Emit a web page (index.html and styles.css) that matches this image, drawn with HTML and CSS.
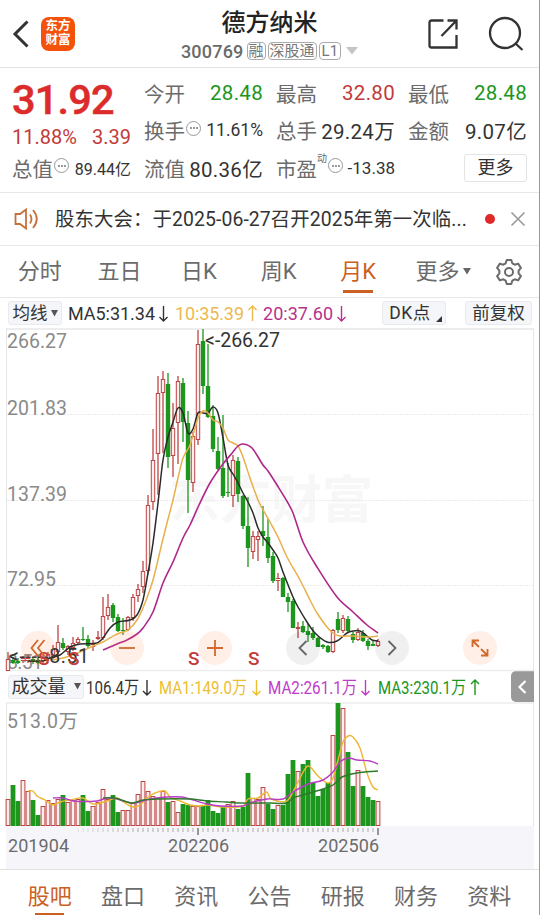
FILE: index.html
```html
<!DOCTYPE html>
<html lang="zh-CN">
<head>
  <meta charset="UTF-8">
  <title>德方纳米 300769</title>
  <link rel="stylesheet" href="styles.css">
</head>
<body>

<header class="header">
  <div class="header-left">
    <svg class="icon-back" width="16" height="28" viewBox="0 0 16 28"><path d="M14.5 1.5L2 14l12.5 12.5"/></svg>
    <div class="logo">东方<br>财富</div>
  </div>
  <div class="header-title">
    <h1>德方纳米</h1>
    <div class="stock-code">
      <span class="code">300769</span>
      <span class="tag">融</span><span class="tag">深股通</span><span class="tag tag-l1">L1</span>
      <svg width="12" height="8" viewBox="0 0 12 8"><path d="M0 0h12L6 7.500z" fill="#c4c4c4"/></svg>
    </div>
  </div>
  <div class="header-right">
    <svg width="30" height="30" viewBox="0 0 30 30"><path d="M15.500 1.500H3.500Q1.500 1.500 1.500 3.500V26.500Q1.500 28.500 3.500 28.500H28.500V16M19.500 1.500h9v9M28.500 1.500L13.500 17"/></svg>
    <svg width="36" height="36" viewBox="0 0 36 36"><circle cx="17" cy="17" r="15"/><path d="M27.500 27.500l7 6.500"/></svg>
  </div>
</header>

<section class="quote">
  <div class="price-col">
    <div class="price">31.92</div>
    <div class="change"><span>11.88%</span><span>3.39</span></div>
    <div class="cell"><span class="label">总值<i class="dots"></i></span><span class="val val-xs">89.44亿</span></div>
  </div>
  <div class="quote-col">
    <div class="cell"><span class="label">今开</span><span class="val green">28.48</span></div>
    <div class="cell"><span class="label">换手<i class="dots"></i></span><span class="val val-s">11.61%</span></div>
    <div class="cell"><span class="label">流值</span><span class="val">80.36亿</span></div>
  </div>
  <div class="quote-col">
    <div class="cell"><span class="label">最高</span><span class="val red">32.80</span></div>
    <div class="cell"><span class="label">总手</span><span class="val">29.24万</span></div>
    <div class="cell"><span class="label">市盈<sup>动</sup><i class="dots"></i></span><span class="val val-pe">-13.38</span></div>
  </div>
  <div class="quote-col">
    <div class="cell"><span class="label">最低</span><span class="val green">28.48</span></div>
    <div class="cell"><span class="label">金额</span><span class="val">9.07亿</span></div>
    <div class="cell cell-end"><button class="btn-more">更多</button></div>
  </div>
</section>

<section class="notice">
  <svg class="icon-speaker" width="27" height="22" viewBox="0 0 27 22"><path d="M1.500 6h4.500L12 1.500v19L6 16H1.500zM16 6.500q3 4.500 0 9M19 2q7.500 9 0 18"/></svg>
  <span class="notice-text">股东大会：于2025-06-27召开2025年第一次临...</span>
  <span class="dot"></span>
  <svg class="icon-close" width="14" height="14" viewBox="0 0 14 14"><path d="M0.500 0.500l13 13M13.500 0.500l-13 13"/></svg>
</section>

<nav class="tabs">
  <span class="tab">分时</span>
  <span class="tab">五日</span>
  <span class="tab">日K</span>
  <span class="tab">周K</span>
  <span class="tab active">月K</span>
  <span class="tab tab-more">更多<svg width="8" height="7" viewBox="0 0 8 7"><path d="M0 0h8L4 6.500z" fill="#666"/></svg></span>
  <svg class="icon-gear" width="28" height="28" viewBox="0 0 28 28"><path d="M11.700 2h4.600l1 3.300 2.400 1.400 3.400-1.100 2.800 4.300-2.300 2.700v2.800l2.300 2.700-2.800 4.300-3.400-1.100-2.400 1.400-1 3.300h-4.600l-1-3.300-2.400-1.400-3.400 1.100-2.800-4.300 2.300-2.700v-2.800L2.100 9.900l2.800-4.300 3.400 1.100 2.400-1.400z"/><circle cx="14" cy="14" r="4"/></svg>
</nav>

<div class="ma-bar">
  <button class="chip chip-ma">均线<svg width="7" height="7" viewBox="0 0 7 7"><path d="M0 0h7L3.500 6.500z" fill="#555"/></svg></button>
  <svg class="readout" width="314" height="30" viewBox="65 0 314 30">
    <text x="68" y="22" textLength="87" fill="#333">MA5:31.34</text>
    <path d="M163.500 8v15m-4-4l4 4 4-4" stroke="#333"/>
    <text x="175" y="22" textLength="69" fill="#ecb94f">10:35.39</text>
    <path d="M252.500 23V8m-4 4l4-4 4 4" stroke="#ecb94f"/>
    <text x="263" y="22" textLength="70" fill="#b8328c">20:37.60</text>
    <path d="M341.500 8v15m-4-4l4 4 4-4" stroke="#b8328c"/>
  </svg>
  <button class="chip chip-dk">DK点<svg width="6" height="6" viewBox="0 0 6 6"><path d="M6 0v6H0z" fill="#333"/></svg></button>
  <button class="chip chip-fq">前复权</button>
</div>

<div class="price-chart">
  <svg id="priceChart" width="539" height="343" viewBox="0 328 539 343"></svg>
  <span class="round b1"><svg width="16" height="18" viewBox="0 0 16 18"><path d="M8 1L1.500 9 8 17M14.500 1L8 9l6.500 8"/></svg></span>
  <span class="round b2"><svg width="18" height="18" viewBox="0 0 18 18"><path d="M1 9h16"/></svg></span>
  <span class="round b3"><svg width="18" height="18" viewBox="0 0 18 18"><path d="M1 9h16M9 1v16"/></svg></span>
  <span class="round gray b4"><svg width="10" height="16" viewBox="0 0 10 16"><path d="M8.500 1L1.500 8l7 7"/></svg></span>
  <span class="round gray b5"><svg width="10" height="16" viewBox="0 0 10 16"><path d="M1.500 1l7 7-7 7"/></svg></span>
  <span class="round b6"><svg width="18" height="18" viewBox="0 0 18 18"><path d="M8 1.500H1.500V8M1.500 1.500L8 8M16.500 10v6.500H10M16.500 16.500L10 10"/></svg></span>
</div>

<div class="vol-bar">
  <button class="chip chip-vol">成交量<svg width="7" height="7" viewBox="0 0 7 7"><path d="M0 0h7L3.500 6.500z" fill="#555"/></svg></button>
  <svg class="readout" width="400" height="31" viewBox="84 0 400 31">
    <text x="86" y="23" textLength="53" lengthAdjust="spacingAndGlyphs" fill="#333">106.4万</text>
    <path d="M147 9v15m-4-4l4 4 4-4" stroke="#333"/>
    <text x="159" y="23" textLength="88" lengthAdjust="spacingAndGlyphs" fill="#ecbe30">MA1:149.0万</text>
    <path d="M256.500 9v15m-4-4l4 4 4-4" stroke="#ecbe30"/>
    <text x="268" y="23" textLength="89" lengthAdjust="spacingAndGlyphs" fill="#c03ccb">MA2:261.1万</text>
    <path d="M365.500 9v15m-4-4l4 4 4-4" stroke="#c03ccb"/>
    <text x="378" y="23" textLength="88" lengthAdjust="spacingAndGlyphs" fill="#1c961c">MA3:230.1万</text>
    <path d="M475 24V9m-4 4l4-4 4 4" stroke="#1c961c"/>
  </svg>
  <span class="collapse"><svg width="9" height="14" viewBox="0 0 9 14"><path d="M7.500 1L1.500 7l6 6"/></svg></span>
</div>

<svg id="volChart" class="vol-chart" width="539" height="167" viewBox="0 702 539 167"></svg>

<nav class="bottom-tabs">
  <span class="btab active">股吧</span>
  <span class="btab">盘口</span>
  <span class="btab">资讯</span>
  <span class="btab">公告</span>
  <span class="btab">研报</span>
  <span class="btab">财务</span>
  <span class="btab">资料</span>
</nav>

<script src="chart.js"></script>
</body>
</html>
```
FILE: styles.css
```css
* {
  box-sizing: border-box;
}

body {
  width: 540px;
  height: 915px;
  margin: 0;
  overflow: hidden;
  background-color: #fff;
  border-right: 1px solid #999;
  font-family: Roboto, "Noto Sans CJK SC", sans-serif;
  color: #333;
}

svg {
  display: block;
  flex: none;
  fill: none;
  overflow: visible;
}

button {
  font-family: inherit;
  color: #333;
  padding: 0;
}

/* header */
.header {
  height: 68px;
  display: grid;
  grid-template-columns: 130px 1fr 130px;
  border-bottom: 1px solid #e2e2e2;
}

.header-left {
  display: flex;
  align-items: center;
  padding-left: 13px;
  gap: 12px;
}

.icon-back {
  stroke: #333;
  stroke-width: 3;
}

.logo {
  width: 34px;
  height: 34px;
  border-radius: 8px;
  background-color: #f4510b;
  color: #fff;
  font-size: 12.5px;
  font-weight: 700;
  line-height: 14.5px;
  text-align: center;
  padding-top: 2px;
}

.header-title h1 {
  margin: 7px 0 0;
  font-size: 24px;
  font-weight: 500;
  line-height: 33px;
  text-align: center;
  color: #222;
}

.stock-code {
  display: flex;
  align-items: center;
  justify-content: center;
  height: 22px;
  gap: 2px;
  color: #777;
}

.code {
  font-size: 18px;
  font-weight: 500;
  letter-spacing: 0.2px;
  margin-right: 1px;
  color: #6a6a6a;
}

.tag {
  border: 1px solid #aaa;
  border-radius: 4px;
  height: 18px;
  padding: 0 1px;
  font-size: 15px;
  line-height: 16px;
}

.tag-l1 {
  padding: 0 2px;
}

.stock-code svg {
  margin-left: 3px;
}

.header-right {
  display: flex;
  align-items: center;
  gap: 30px;
  padding-left: 19px;
}

.header-right svg {
  stroke: #333;
  stroke-width: 2.3;
}

/* quote */
.quote {
  height: 125px;
  padding: 6px 12px 0;
  display: grid;
  grid-template-columns: 119px 119px 119px 119px;
  gap: 13px;
  border-bottom: 1px solid #e8e8e8;
}

.price {
  height: 50px;
  line-height: 52px;
  font-size: 41.5px;
  font-weight: 500;
  letter-spacing: -0.8px;
  color: #dc2b2b;
  -webkit-text-stroke: 0.5px #dc2b2b;
}

.change {
  height: 25px;
  line-height: 27px;
  display: flex;
  justify-content: space-between;
  font-size: 20px;
  color: #c23b3b;
}

.cell {
  height: 37.5px;
  display: flex;
  justify-content: space-between;
  align-items: center;
}

.cell-end {
  justify-content: flex-end;
}

.label {
  display: flex;
  align-items: center;
  font-size: 20.5px;
  color: #6b6b6b;
  white-space: nowrap;
}

.label sup {
  align-self: flex-start;
  font-size: 10px;
  line-height: 12px;
}

.dots {
  width: 15px;
  height: 15px;
  border: 1px solid #999;
  border-radius: 50%;
  margin: -4px 0 0 1px;
  display: flex;
  align-items: center;
  justify-content: center;
}

.dots::before {
  content: "";
  width: 2px;
  height: 2px;
  background-color: #999;
  box-shadow: -3px 0 #999, 3px 0 #999;
}

.val {
  font-size: 20.5px;
  letter-spacing: 0.3px;
  white-space: nowrap;
}

.val-s {
  font-size: 17.5px;
  letter-spacing: 0;
}

.val-pe {
  font-size: 17px;
  letter-spacing: 0;
}

.val-xs {
  font-size: 16px;
  letter-spacing: 0;
}

.green {
  color: #1c961c;
}

.red {
  color: #c23b3b;
}

.btn-more {
  width: 63px;
  height: 28px;
  border: 1px solid #e4e4e4;
  border-radius: 3px;
  background-color: #fff;
  font-size: 18px;
  line-height: 24px;
}

/* notice */
.notice {
  height: 53px;
  display: flex;
  align-items: center;
  padding: 0 14px;
  border-bottom: 1px solid #e8e8e8;
}

.icon-speaker {
  stroke: #c8703a;
  stroke-width: 1.8;
}

.notice-text {
  width: 429px;
  padding: 0 0 3px 14px;
  font-size: 19.4px;
  letter-spacing: 0.1px;
  white-space: nowrap;
}

.dot {
  width: 10px;
  height: 10px;
  margin-left: 15px;
  border-radius: 50%;
  background-color: #e02828;
}

.icon-close {
  margin-left: 16px;
  stroke: #999;
  stroke-width: 1.6;
}

/* period tabs */
.tabs {
  height: 52px;
  display: flex;
  align-items: center;
  border-bottom: 1px solid #e8e8e8;
}

.tab {
  width: 79.6px;
  height: 51px;
  line-height: 51px;
  font-size: 22px;
  text-align: center;
  color: #6b6b6b;
}

.tab.active {
  color: #cc6024;
  background: linear-gradient(#cc6024, #cc6024) center 44px / 30px 3px no-repeat;
}

.tab-more {
  width: 91px;
  display: flex;
  align-items: center;
  justify-content: center;
  gap: 4px;
}

.icon-gear {
  margin-left: 6px;
  stroke: #6b6b6b;
  stroke-width: 2;
  stroke-linejoin: round;
}

/* indicator bars */
.ma-bar {
  height: 30px;
  display: flex;
  align-items: center;
  padding-left: 8px;
}

.chip {
  height: 24px;
  flex: none;
  display: flex;
  align-items: center;
  justify-content: center;
  gap: 3px;
  border: 1px solid #e9eaee;
  border-radius: 3px;
  background-color: #f5f6f9;
  font-size: 17.5px;
  line-height: 22px;
}

.chip-ma {
  width: 54px;
}

.chip-ma + .readout {
  margin-left: 3px;
}

.chip-dk {
  width: 64px;
  margin-left: 3px;
  padding-left: 3px;
  gap: 5px;
  letter-spacing: 0.5px;
}

.chip-dk svg {
  margin-top: 12px;
}

.chip-fq {
  width: 67px;
  margin-left: 19px;
}

.readout {
  font-size: 18px;
  stroke-width: 1.4;
}

.price-chart {
  position: relative;
  height: 343px;
}

.round {
  position: absolute;
  top: 303px;
  width: 34px;
  height: 34px;
  border-radius: 50%;
  background-color: rgba(255, 120, 60, 0.12);
  display: flex;
  align-items: center;
  justify-content: center;
}

.round svg {
  stroke: #d2692a;
  stroke-width: 1.8;
}

.round.gray {
  background-color: rgba(0, 0, 0, 0.06);
}

.round.gray svg {
  stroke: #666;
}

.b1 { left: 21px; }
.b2 { left: 110px; }
.b3 { left: 198px; }
.b4 { left: 286px; }
.b5 { left: 375px; }
.b6 { left: 463px; }

.vol-bar {
  height: 31px;
  display: flex;
  align-items: center;
  padding-left: 8px;
}

.chip-vol {
  width: 76px;
  gap: 8px;
  font-size: 18px;
}

.collapse {
  width: 23px;
  height: 31px;
  margin-left: 27px;
  flex: none;
  border-radius: 5px 0 0 5px;
  background-color: #999;
  display: flex;
  align-items: center;
  justify-content: center;
}

.collapse svg {
  stroke: #fff;
  stroke-width: 2.2;
}

.axis-label {
  font-size: 19.5px;
  fill: #8a8a8a;
}

.date-label {
  font-size: 18px;
  fill: #6b6b6b;
}

.point-label {
  font-size: 19.5px;
  fill: #333;
}

.watermark {
  font-size: 51px;
  font-weight: 700;
  fill: #f7f7f7;
}

.mark-s {
  font-size: 19px;
  font-weight: 500;
  fill: #c23b3b;
}

/* bottom tabs */
.bottom-tabs {
  height: 46px;
  display: flex;
  padding: 0 13px;
  border-top: 1px solid #e2e2e2;
}

.btab {
  flex: 1;
  height: 46px;
  line-height: 53px;
  font-size: 22px;
  text-align: center;
  color: #6b6b6b;
}

.btab.active {
  color: #cc6024;
  background: linear-gradient(#cc6024, #cc6024) center 43px / 29px 3px no-repeat;
}
```
FILE: chart.js
```javascript
// one entry per month: [colour, high, body top, body bottom, low, volume top]
var candles = [
  ['r',652,659,671,671,799], ['g',657,660,663,664,785], ['g',658,661,663,664,801], ['r',656,658,661,663,780], ['r',655,658,661,663,791],
  ['g',657,659,662,664,800], ['g',658,660,663,664,815], ['r',655,657,661,663,806], ['r',652,654,659,661,800], ['r',645,649,658,660,803],
  ['r',625,642,652,658,799], ['g',638,643,648,650,795], ['r',645,646,652,655,802], ['r',637,643,648,651,800], ['r',637,639,643,645,799],
  ['g',627,639,640,641,795], ['g',635,639,646,648,811], ['r',640,644,647,651,806], ['r',631,637,639,640,802], ['r',597,616,638,640,789],
  ['r',594,607,616,620,799], ['g',603,605,618,622,795], ['g',614,617,631,632,812], ['g',618,630,631,635,810], ['r',616,617,630,631,810],
  ['r',594,597,618,621,803], ['r',584,589,596,602,794], ['r',561,571,587,593,781], ['r',495,505,571,574,791], ['r',429,460,502,510,796],
  ['r',376,393,454,495,798], ['r',371,379,393,453,791], ['g',373,384,457,468,802], ['r',403,428,456,477,801], ['r',376,381,423,464,812],
  ['g',378,383,422,442,804], ['g',411,423,480,513,805], ['r',432,436,483,492,806], ['r',330,344,440,445,806], ['g',329,341,386,394,805],
  ['g',344,386,417,418,800], ['g',405,416,449,452,811], ['g',437,451,469,470,813], ['g',415,468,496,498,807], ['g',463,492,493,497,804],
  ['r',455,460,496,507,801], ['g',457,461,494,502,809], ['g',495,496,526,529,807], ['g',497,526,548,567,773], ['r',531,536,552,559,798],
  ['r',531,536,540,561,799], ['g',506,531,536,546,787], ['g',519,537,558,563,804], ['g',552,556,581,583,809], ['r',573,578,581,591,805],
  ['g',577,578,597,597,805], ['g',593,597,602,612,774], ['g',599,601,628,628,760], ['r',622,627,629,638,771], ['g',621,626,632,633,764],
  ['g',624,631,635,642,760], ['g',627,633,638,640,783], ['g',637,638,647,647,796], ['g',644,645,647,649,789], ['g',645,646,652,653,783],
  ['r',629,630,652,653,735], ['g',612,619,630,633,703], ['r',615,618,631,633,708], ['g',616,619,631,632,752], ['g',632,634,640,643,786],
  ['r',628,632,640,641,770], ['g',630,633,641,642,786], ['g',639,641,646,650,797], ['g',641,644,646,646,800], ['r',639,641,646,647,801]
];

// months whose volume bar colour differs from the candle
var volColor = {8: 'r', 23: 'r', 44: 'r', 51: 'r'};

var ma5 = '28,661 43,661 50,658 60,655 70,647 80,644 97,643 103,638 110,628 118,622 130,620 137,615 143,600 148,573 153,543 158,503 163,460 168,437 173,422 178,408 183,413 188,433 193,429 198,413 203,413 208,413 213,407 218,413 223,438 228,465 233,474 238,483 243,493 248,502 253,513 258,528 263,537 268,543 273,550 278,558 283,572 293,597 298,607 307,622 315,633 327,642 337,641 347,633 353,631 360,631 367,636 372,640 378,641';
var ma10 = '53,660 67,657 80,652 93,646 103,642 117,634 128,630 137,620 145,603 153,580 162,543 167,523 173,500 178,478 183,458 190,445 198,418 203,411 208,413 213,420 218,422 223,428 228,440 233,443 238,446 243,457 250,478 258,500 262,508 270,522 278,537 287,557 300,580 310,600 317,613 327,627 333,633 340,636 353,636 367,637 378,636';
var ma20 = '103,650 117,644 127,640 137,634 143,628 153,612 163,583 173,562 183,538 190,525 199,505 210,483 223,464 233,452 238,446 243,444 252,448 263,465 268,471 277,485 288,503 293,513 303,542 317,567 337,597 353,612 367,625 378,633';

var vma1 = '28,791 33,791 37,796 45,800 53,805 60,802 70,800 83,798 93,804 107,801 117,798 125,803 133,807 140,805 147,798 155,793 165,791 170,797 180,801 190,805 200,806 207,805 223,807 243,806 248,799 258,798 267,792 270,798 277,801 287,801 293,792 300,778 308,766 318,776 328,783 333,778 338,760 343,742 348,736 353,737 360,748 367,773 373,787 378,790';
var vma2 = '53,798 63,798 73,801 97,801 107,798 117,799 133,803 150,799 167,797 182,797 190,799 207,804 220,806 243,806 250,803 267,799 283,799 293,792 308,784 323,780 333,772 340,762 348,758 357,760 370,761 378,764';
var vma3 = '103,798 115,798 127,802 133,803 143,800 160,799 190,799 207,801 227,802 240,803 270,803 287,803 293,798 303,795 313,792 323,789 333,785 342,777 357,773 378,771';

var RED = '#bd4545';
var GREEN = '#1c961c';

function line(x1, y1, x2, y2, color, width, extra) {
  return '<line x1="' + x1 + '" y1="' + y1 + '" x2="' + x2 + '" y2="' + y2 + '" stroke="' + color + '" stroke-width="' + width + '" ' + (extra || '') + '/>';
}

function bar(x, top, bottom, c, w) {
  if (c === 'g') {
    return '<rect x="' + (x - w / 2) + '" y="' + top + '" width="' + w + '" height="' + Math.max(bottom - top, 1) + '" fill="' + GREEN + '"/>';
  }
  return '<rect x="' + (x - w / 2 + 0.5) + '" y="' + (top + 0.5) + '" width="' + (w - 1) + '" height="' + Math.max(bottom - top - 1, 1) + '" fill="#fdeeee" stroke="' + RED + '"/>';
}

function text(x, y, cls, str, len) {
  return '<text x="' + x + '" y="' + y + '" class="' + cls + '"' + (len ? ' textLength="' + len + '"' : '') + '>' + str + '</text>';
}

// smooth path through the points
function curve(points, color, width) {
  var p = points.split(' ').map(function (s) { return s.split(',').map(Number); });
  var d = 'M' + p[0];
  for (var i = 0; i < p.length - 1; i++) {
    var b = p[i], c = p[i + 1];
    var a = p[i - 1] || b, e = p[i + 2] || c;
    // tangents are scaled to the segment so uneven spacing doesn't bend the line
    var w = (c[0] - b[0]) / 3;
    var m1 = (c[1] - a[1]) / (c[0] - a[0]);
    var m2 = (e[1] - b[1]) / (e[0] - b[0]);
    d += 'C' + (b[0] + w) + ',' + (b[1] + m1 * w) + ' ' + (c[0] - w) + ',' + (c[1] - m2 * w) + ' ' + c;
  }
  return '<path d="' + d + '" fill="none" stroke="' + color + '" stroke-width="' + width + '"/>';
}

function drawPrice() {
  var out = text(169, 518, 'watermark', '东方财富', 204);
  out += line(6, 329, 534, 329, '#ededed', 2);
  out += line(6, 670.5, 534, 670.5, '#ededed', 1.5);
  out += line(6.5, 329, 6.5, 671, '#e6e6e6', 1);
  out += line(533.5, 329, 533.5, 671, '#e6e6e6', 1);
  [414.5, 500.5, 585.5].forEach(function (y) {
    out += line(7, y, 533, y, '#ececec', 1, 'stroke-dasharray="2 1"');
  });
  out += text(7, 348, 'axis-label', '266.27', 60);
  out += text(7, 414.5, 'axis-label', '201.83', 60);
  out += text(7, 500.5, 'axis-label', '137.39', 60);
  out += text(7, 586, 'axis-label', '72.95', 49);
  out += text(7, 669, 'axis-label', '8.51', 36);
  candles.forEach(function (k, i) {
    var x = 8 + i * 5;
    out += line(x, k[1], x, k[4], k[0] === 'g' ? GREEN : RED, 1.3);
    out += bar(x, k[2], k[3], k[0], 4.4);
  });
  out += curve(ma5, '#2b2b2b', 1.5) + curve(ma10, '#e8b04c', 1.5) + curve(ma20, '#b0278a', 1.6);
  out += text(205, 347, 'point-label', '&lt;-266.27', 75);
  out += text(9, 663, 'point-label', '&lt;-----8.51', 80);
  [38, 68, 188, 248].forEach(function (x) {
    out += text(x, 665, 'mark-s', 'S');
  });
  document.getElementById('priceChart').innerHTML = out;
}

function drawVolume() {
  var out = '<rect x="6" y="826" width="528" height="43" fill="#f6f6fa"/>';
  out += line(6, 703, 534, 703, '#ededed', 1.5);
  out += line(6.5, 703, 6.5, 826, '#e6e6e6', 1);
  out += line(533.5, 703, 533.5, 826, '#e6e6e6', 1);
  out += text(7, 728, 'axis-label', '513.0万', 71);
  candles.forEach(function (k, i) {
    out += bar(8 + i * 5, k[5], 826, volColor[i] || k[0], 4.8);
  });
  out += curve(vma1, '#ecb733', 1.4) + curve(vma2, '#b83cc4', 1.4) + curve(vma3, '#2c7a2c', 1.4);
  for (var x = 78; x <= 378; x += 5) {
    var big = x === 198 || x === 378;
    out += line(x, 828, x, big ? 835 : 832, big ? '#777' : '#aaa', big ? 1.5 : 1, 'opacity="' + Math.min(1, (x - 58) / 80) + '"');
  }
  out += text(8, 852, 'date-label', '201904', 61);
  out += text(168, 852, 'date-label', '202206', 61);
  out += text(318, 852, 'date-label', '202506', 61);
  document.getElementById('volChart').innerHTML = out;
}

drawPrice();
drawVolume();
```
